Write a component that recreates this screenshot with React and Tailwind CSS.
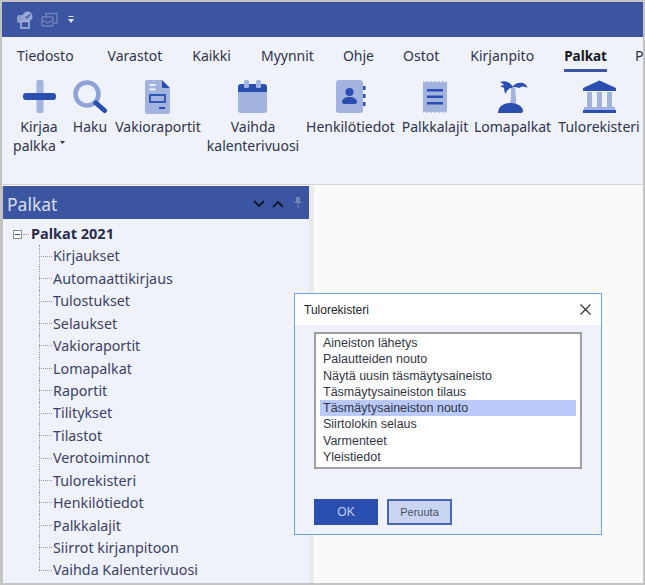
import React from "react";

const DARK = "#2a4fb0";
const LIGHT = "#a3b3df";

const PlusIcon = () => (
  <svg width="34" height="34" viewBox="0 0 34 34">
    <rect x="14.500" y="0" width="7" height="33" rx="2" fill={LIGHT} />
    <rect x="1" y="13" width="33" height="7" rx="3" fill={DARK} />
  </svg>
);

const SearchIcon = () => (
  <svg width="34" height="34" viewBox="0 0 34 34">
    <circle cx="14" cy="14" r="11.500" fill="none" stroke="#8ea2d8" strokeWidth="4.500" />
    <path d="M23 23l8.500 7.500" stroke={DARK} strokeWidth="5" strokeLinecap="round" />
  </svg>
);

const ReportIcon = () => (
  <svg width="26" height="34" viewBox="0 0 26 34">
    <path d="M2 0h15v8h8v24a2 2 0 0 1-2 2H2a2 2 0 0 1-2-2V2a2 2 0 0 1 2-2z" fill={LIGHT} />
    <path d="M17 0l8 8h-8z" fill={DARK} />
    <rect x="4.500" y="4" width="6" height="2" fill="#eff2fa" />
    <rect x="4.500" y="8.500" width="6" height="2" fill="#eff2fa" />
    <rect x="5" y="15" width="15" height="7" fill="none" stroke={DARK} strokeWidth="1.800" />
    <rect x="14" y="27" width="6" height="2" fill={DARK} />
  </svg>
);

const CalendarIcon = () => (
  <svg width="30" height="34" viewBox="0 0 30 34">
    <path d="M0 12h29v18a3 3 0 0 1-3 3H3a3 3 0 0 1-3-3z" fill={LIGHT} />
    <path d="M3 4h23a3 3 0 0 1 3 3v5H0V7a3 3 0 0 1 3-3z" fill={DARK} />
    <rect x="6" y="0" width="5" height="8" rx="1.500" fill={LIGHT} />
    <rect x="18" y="0" width="5" height="8" rx="1.500" fill={LIGHT} />
  </svg>
);

const ContactIcon = () => (
  <svg width="30" height="34" viewBox="0 0 30 34">
    <rect x="0" y="0" width="27" height="33" rx="3" fill={LIGHT} />
    <circle cx="13.500" cy="12" r="4" fill={DARK} />
    <path d="M6 22c0-3 3-5 7.500-5s7.500 2 7.500 5c0 1-1 2-2 2H8c-1 0-2-1-2-2z" fill={DARK} />
    <rect x="27" y="6" width="2.500" height="4" fill={DARK} />
    <rect x="27" y="14" width="2.500" height="4" fill={DARK} />
    <rect x="27" y="22" width="2.500" height="4" fill={DARK} />
  </svg>
);

const ReceiptIcon = () => (
  <svg width="24" height="34" viewBox="0 0 24 34">
    <path d="M0 1l2 1.500L4 1l2 1.500L8 1l2 1.500L12 1l2 1.500L16 1l2 1.500L20 1l2 1.500L24 1v32l-2-1.500-2 1.500-2-1.500-2 1.500-2-1.500-2 1.500-2-1.500-2 1.500-2-1.500-2 1.500-2-1.500-2 1.500z" fill={LIGHT} />
    <rect x="4" y="9" width="16" height="2.500" fill={DARK} />
    <rect x="4" y="15.500" width="16" height="2.500" fill={DARK} />
    <rect x="4" y="22" width="16" height="2.500" fill={DARK} />
  </svg>
);

const PalmIcon = () => (
  <svg width="30" height="34" viewBox="0 0 30 34">
    <path d="M13 8h4c1 6 1 11 1 17h-6c1-6 1-11 1-17z" fill={LIGHT} />
    <path d="M0 33c0-6 5-10 12.500-10S25 27 25 31c0 1-1 2-2 2z" fill={DARK} />
    <path d="M15 7C12 2 7 0 2 2c2 1 3 2 4 3-2 0-3 1-3.500 2 1.500 0 3 0 3.500 1 0 2 .5 4 1.500 6 1-3 2.500-5 5-6 1 0 2 0 3-1z" fill={DARK} />
    <path d="M14 7c3-4 7-5 11-4 2 .5 4 2.500 4.500 5-3-2-6-2-8 0-2-1-5-1-7.500-1z" fill={DARK} />
  </svg>
);

const BankIcon = () => (
  <svg width="33" height="34" viewBox="0 0 33 34">
    <path d="M16.500 0.500L33 8v3H0V8z" fill={DARK} />
    <rect x="4" y="12" width="5" height="15" fill={LIGHT} />
    <rect x="14" y="12" width="5" height="15" fill={LIGHT} />
    <rect x="24" y="12" width="5" height="15" fill={LIGHT} />
    <rect x="1" y="27" width="31" height="3" fill={LIGHT} />
    <rect x="0" y="30" width="33" height="3" fill={DARK} />
  </svg>
);

const ribbonItems = [
  { w: "w-[56px]", icon: <PlusIcon />, label: "Kirjaa\npalkka", menu: true },
  { w: "w-[38px]", icon: <SearchIcon />, label: "Haku" },
  { w: "w-[90px]", icon: <ReportIcon />, label: "Vakioraportit" },
  { w: "w-[92px]", icon: <CalendarIcon />, label: "Vaihda\nkalenterivuosi" },
  { w: "w-[95px]", icon: <ContactIcon />, label: "Henkilötiedot" },
  { w: "w-[66px]", icon: <ReceiptIcon />, label: "Palkkalajit" },
  { w: "w-[81px]", icon: <PalmIcon />, label: "Lomapalkat" },
  { w: "w-[84px]", icon: <BankIcon />, label: "Tulorekisteri" },
];

const tabs = [
  { label: "Tiedosto", cls: "pl-[15px] pr-[19px]" },
  { label: "Varastot", cls: "px-[15px]" },
  { label: "Kaikki", cls: "px-[15px]" },
  { label: "Myynnit", cls: "px-[15px]" },
  { label: "Ohje", cls: "px-[15px] -ml-px" },
  { label: "Ostot", cls: "px-[15px] -ml-px" },
  { label: "Kirjanpito", cls: "px-[15px] ml-px" },
  { label: "Palkat", cls: "px-[15px]" },
  { label: "Palvelut", cls: "px-[15px] -ml-[2px]" },
];

const treeRows = [
  "Kirjaukset", "Automaattikirjaus", "Tulostukset", "Selaukset", "Vakioraportit", "Lomapalkat", "Raportit",
  "Tilitykset", "Tilastot", "Verotoiminnot", "Tulorekisteri", "Henkilötiedot", "Palkkalajit", "Siirrot kirjanpitoon",
  "Vaihda Kalenterivuosi",
];

const dialogRows = [
  "Aineiston lähetys", "Palautteiden nouto", "Näytä uusin täsmäytysaineisto", "Täsmäytysaineiston tilaus",
  "Täsmäytysaineiston nouto", "Siirtolokin selaus", "Varmenteet", "Yleistiedot",
];

export default function App() {
  return (
    <div className="w-[645px] h-[585px] bg-[#c4c4c4] p-[2px] overflow-hidden relative font-['Noto_Sans',sans-serif]">
      <div className="h-full flex flex-col bg-[#fafafa]">
        {/* Title bar */}
        <div className="h-[35px] shrink-0 bg-[#3b55a0] flex items-center pl-[14px] gap-[7px]">
          <svg width="18" height="18" viewBox="0 0 18 18">
            <path d="M1 6a2 2 0 0 1 2-2h5v8H3a2 2 0 0 1-2-2z" fill="#8a9bcd" />
            <circle cx="11.500" cy="5.500" r="5" fill="#98a8d4" />
            <path d="M9.500 5.500l1.500 1.500 3-3.500" stroke="#3b55a0" strokeWidth="1.200" fill="none" />
            <rect x="5" y="10.500" width="8" height="6.500" fill="#3b55a0" stroke="#aab7dd" strokeWidth="1.500" />
          </svg>
          <svg width="18" height="16" viewBox="0 0 18 16">
            <rect x="1" y="5" width="11" height="9" rx="1" fill="none" stroke="#7384bd" strokeWidth="1.300" />
            <path d="M1 8l5.500 3L12 8" stroke="#7384bd" strokeWidth="1.200" fill="none" />
            <path d="M5 4V1.500h11V11h-3" stroke="#7384bd" strokeWidth="1.300" fill="none" />
          </svg>
          <svg width="6" height="7" viewBox="0 0 6 7" className="ml-[2px]">
            <rect x="0.500" y="0" width="5" height="1" fill="#dfe4f3" />
            <path d="M0 3h6L3 7z" fill="#dfe4f3" />
          </svg>
        </div>

        {/* Tabs */}
        <div className="h-[35px] shrink-0 bg-[#eff2fa] flex pt-[9px] overflow-hidden text-[14px] leading-[20px] text-[#30344a] whitespace-nowrap">
          {tabs.map((tab) => (
            <div key={tab.label} className={`${tab.cls} shrink-0`}>
              <div className={tab.label === "Palkat" ? "text-[13.5px] font-bold text-[#14171f] border-b-[3px] border-[#3b55a0] h-[26px]" : "h-[26px]"}>
                {tab.label}
              </div>
            </div>
          ))}
        </div>

        {/* Ribbon */}
        <div className="h-[113px] shrink-0 bg-[#eff2fa] border-b border-[#d4d4d4] flex items-start gap-[4px] overflow-hidden pt-[8px] pl-[9px]">
          {ribbonItems.map((item) => (
            <div key={item.label} className={`${item.w} shrink-0 flex flex-col items-center text-center text-[14px] leading-[19px] text-[#30344a]`}>
              <div className="h-[34px] flex items-center justify-center">{item.icon}</div>
              <div className="mt-[3px] whitespace-pre-line">
                {item.label}
                {item.menu && (
                  <svg width="5" height="3" viewBox="0 0 5 3" className="inline-block ml-[4px] align-[7px]">
                    <path d="M0 0h5L2.500 3z" fill="#30344a" />
                  </svg>
                )}
              </div>
            </div>
          ))}
        </div>

        {/* Body */}
        <div className="flex-1 flex min-h-0 pt-[1px]">
          <div className="w-[307px] shrink-0 pl-[1px] bg-[#c4c4c4] flex flex-col">
            <div className="h-[33px] shrink-0 bg-[#3b55a0] flex items-center justify-between pl-[4px] pr-[7px] pt-[3px]">
              <span className="text-[17.5px] text-[#d9dff2]">Palkat</span>
              <div className="flex items-center">
                <svg width="12" height="8" viewBox="0 0 12 8"><path d="M1 1l5 5 5-5" stroke="#10152b" strokeWidth="1.800" fill="none" /></svg>
                <svg width="12" height="8" viewBox="0 0 12 8" className="ml-[7px]"><path d="M1 7l5-5 5 5" stroke="#10152b" strokeWidth="1.800" fill="none" /></svg>
                <svg width="8" height="11" viewBox="0 0 8 11" className="ml-[10px] -mt-[4px]">
                  <path d="M2 0h4v5h2v1H4.500v5h-1V6H0V5h2z" fill="#7486bb" />
                </svg>
              </div>
            </div>
            <div className="flex-1 bg-[#eff2fa] pt-[4px] text-[14.3px] text-[#3b4266]">
              <div className="h-[22px] flex items-center pl-[10px]">
                <span className="w-[9px] h-[9px] border border-[#8a8fa0] bg-white flex items-center justify-center shrink-0">
                  <span className="w-[5px] h-px bg-[#2a4fb0]" />
                </span>
                <span className="w-[6px] border-t border-dotted border-[#9a9a9a] ml-px" />
                <span className="text-[14.5px] font-bold text-[#272c4d] ml-[2px]">Palkat 2021</span>
              </div>
              {treeRows.map((row, i) => (
                <div key={row} className="h-[22.43px] flex items-center pl-[36px] relative whitespace-nowrap">
                  <span className={`absolute left-[36px] top-0 border-l border-dotted border-[#9a9a9a] ${i === treeRows.length - 1 ? "h-1/2" : "h-full"}`} />
                  <span className="w-[13px] border-t border-dotted border-[#9a9a9a] mr-px" />
                  {row}
                </div>
              ))}
            </div>
          </div>
          <div className="w-[5px] shrink-0 bg-[#ebebeb]" />
          <div className="flex-1 bg-[#fafafa]" />
        </div>
      </div>

      {/* Dialog */}
      <div className="absolute left-[294px] top-[293px] w-[308px] h-[242px] border border-[#6aa6e6] bg-[#eff2fa] flex flex-col font-['Liberation_Sans',sans-serif] text-[#33363f]">
        <div className="h-[31px] shrink-0 bg-white flex items-center justify-between pl-[9px] pr-[10px] text-[12px] text-[#222]">
          <span>Tulorekisteri</span>
          <svg width="11" height="11" viewBox="0 0 11 11" className="-mt-px"><path d="M0.500 0.500l10 10M10.500 0.500l-10 10" stroke="#333" strokeWidth="1.200" fill="none" /></svg>
        </div>
        <div className="ml-[19px] mt-[7px] w-[268px] h-[137px] border-2 border-[#9f9f9f] bg-white pt-[1px] px-[4px] text-[12.5px]">
          {dialogRows.map((row, i) => (
            <div key={row} className={`h-[16.3px] leading-[16.3px] pl-[3px] whitespace-nowrap ${i === 4 ? "bg-[#b8c9fa]" : ""}`}>
              {row}
            </div>
          ))}
        </div>
        <div className="ml-[19px] mt-[30px] flex gap-[9px] text-[12px]">
          <button className="w-[64px] h-[26px] bg-[#2a4fb0] text-[#c3cdec]">OK</button>
          <button className="w-[65px] h-[26px] bg-[#c9d5f0] border-2 border-[#4a66b5] text-[11px] text-[#4a4f60]">Peruuta</button>
        </div>
      </div>
    </div>
  );
}
